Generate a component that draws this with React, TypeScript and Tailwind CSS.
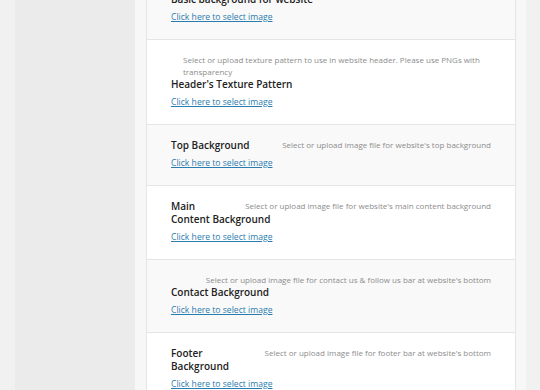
const rows = [
  { title: "Basic background for website", desc: "" },
  {
    title: "Header's Texture Pattern",
    desc: "Select or upload texture pattern to use in website header. Please use PNGs with transparency",
  },
  { title: "Top Background", desc: "Select or upload image file for website's top background" },
  { title: "Main Content Background", desc: "Select or upload image file for website's main content background" },
  {
    title: "Contact Background",
    desc: "Select or upload image file for contact us & follow us bar at website's bottom",
  },
  { title: "Footer Background", desc: "Select or upload image file for footer bar at website's bottom" },
];

function OptionRow({ title, desc, index }: { title: string; desc: string; index: number }) {
  return (
    <div
      className={`px-[24px] pt-[14px] pb-[16px] border-b border-[#e5e5e5] ${
        index % 2 === 0 ? "bg-[#f9f9f9]" : "bg-white"
      }`}
    >
      {desc && (
        <p className="float-right ml-[12px] max-w-[308px] text-[8px] leading-[12px] text-[#8c8c8c]">{desc}</p>
      )}
      <h3 className="text-[10px] leading-[13px] font-semibold text-[#222]">{title}</h3>
      <a href="#" className="clear-both block mt-[5px] text-[8.6px] leading-[12px] text-[#2b7cae] underline">
        Click here to select image
      </a>
    </div>
  );
}

export default function App() {
  return (
    <div className="flex w-[540px] h-[390px] overflow-hidden bg-[#f1f1f1] font-['Open_Sans',sans-serif]">
      <div className="w-[15px] shrink-0" />
      <aside className="w-[120px] shrink-0 bg-[#ebebeb]" />
      <main className="w-[391px] shrink-0 bg-[#f7f7f7] pl-[11px] pr-[10px]">
        <div className="-mt-[21px] border-x border-[#e5e5e5]">
          {rows.map((r, i) => (
            <OptionRow key={r.title} title={r.title} desc={r.desc} index={i} />
          ))}
        </div>
      </main>
    </div>
  );
}
